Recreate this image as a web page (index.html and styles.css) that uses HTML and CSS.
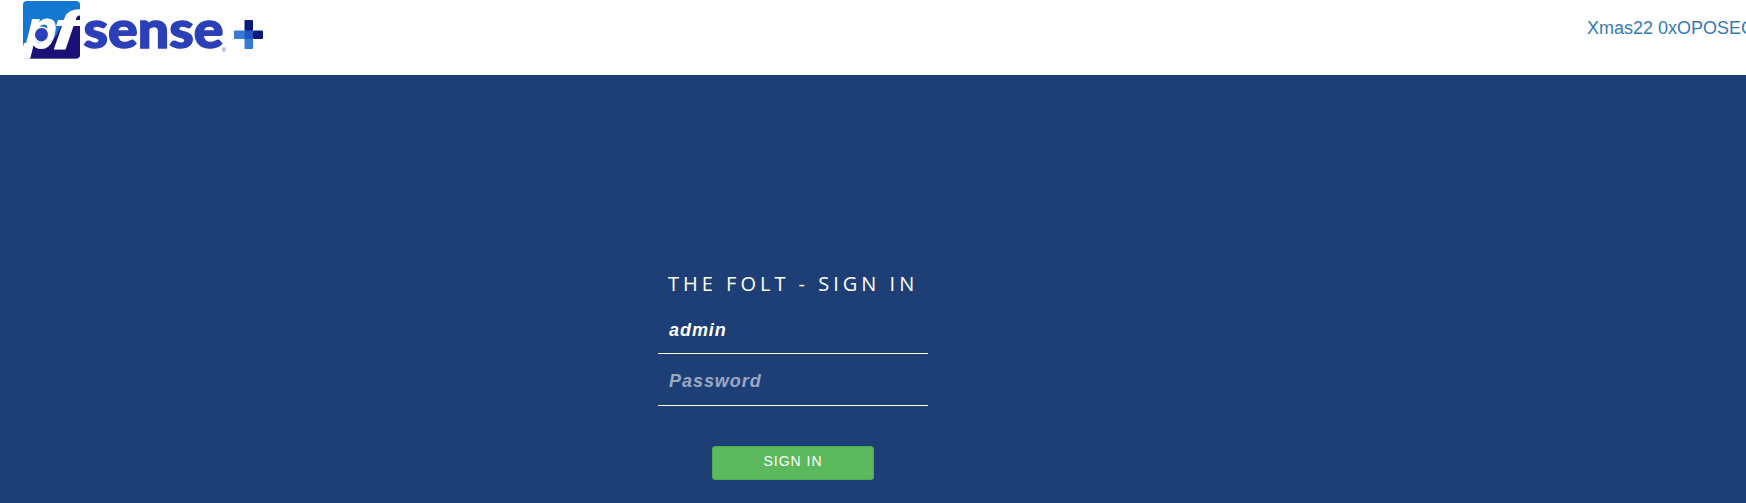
FILE: index.html
```html
<!DOCTYPE html>
<html lang="en">
<head>
<meta charset="utf-8">
<title>Sign In</title>
<link rel="stylesheet" href="styles.css">
</head>
<body>
<header class="topbar">
  <svg class="logo" width="270" height="62" viewBox="0 0 270 62" role="img" aria-label="pfSense plus">
    <defs><clipPath id="badge"><rect x="23" y="1" width="57" height="57.500" rx="4"/></clipPath></defs>
    <g clip-path="url(#badge)">
      <rect x="23" y="1" width="57" height="58" fill="#1477d1"/>
      <path d="M68 12H80V59H28L32 46L50 44L56 36Z" fill="#1b1075"/>
      <path d="M23 47L24 43L33 43L28.500 59H23Z" fill="#fff"/>
      <text class="mark" x="0" y="0" transform="translate(24.500 48) skewX(-4)" textLength="31" lengthAdjust="spacingAndGlyphs">p</text>
      <ellipse cx="41.500" cy="34.500" rx="7.200" ry="7.500" fill="#2b40b8" stroke="#fff" stroke-width="1.500" transform="rotate(20 41 34.500)"/>
      <text class="mark" x="0" y="0" transform="translate(52 48.500) skewX(-4)" textLength="25" lengthAdjust="spacingAndGlyphs">f</text>
    </g>
    <text class="word" x="83.500" y="48" textLength="140" lengthAdjust="spacingAndGlyphs">sense</text>
    <text class="reg" x="222" y="52">®</text>
    <rect x="244.500" y="20" width="8.500" height="11" rx="1" fill="#071b7c"/>
    <rect x="253" y="30.500" width="10" height="8.500" rx="1" fill="#071b7c"/>
    <rect x="234" y="30.500" width="11" height="8.500" rx="1" fill="#367bd4"/>
    <rect x="244.500" y="38" width="8.500" height="11" rx="1" fill="#367bd4"/>
    <rect x="244.500" y="30.500" width="8.500" height="8.500" fill="#2752c5"/>
  </svg>
  <a class="host">Xmas22 0xOPOSEC</a>
</header>
<main class="page">
  <form class="login">
    <h1 class="title">THE FOLT - SIGN IN</h1>
    <input class="field" type="text" value="admin" aria-label="Username">
    <input class="field" type="password" placeholder="Password" aria-label="Password">
    <button class="submit" type="button">SIGN IN</button>
  </form>
</main>
</body>
</html>
```
FILE: styles.css
```css
* { box-sizing: border-box; }
body {
  margin: 0;
  height: 503px;
  overflow: hidden;
  background: #1e3f75;
  font-family: "Liberation Sans", Arial, sans-serif;
}
.topbar {
  display: flex;
  height: 75px;
  background: #fff;
}
.logo { flex: none; }
.mark {
  font: italic bold 54px "Liberation Sans", Arial, sans-serif;
  fill: #fff;
  stroke: #fff;
  stroke-width: 1px;
}
.word {
  font: 900 52px Lato, sans-serif;
  fill: #2b40b8;
  stroke: #2b40b8;
  stroke-width: 1.5px;
}
.reg { font: 5px "Liberation Sans", sans-serif; fill: #2b40b8; }
.host {
  flex: none;
  margin-left: 1317px;
  padding-top: 18px;
  font-size: 18px;
  line-height: 20px;
  white-space: nowrap;
  color: #337ab7;
}
.page { padding: 195px 0 0 658px; }
.login {
  display: flex;
  flex-direction: column;
  width: 270px;
}
.title {
  margin: 0;
  padding-left: 10px;
  font: 400 20px/28px "Open Sans", sans-serif;
  letter-spacing: 4px;
  white-space: nowrap;
  color: #fff;
}
.field {
  width: 270px;
  height: 42px;
  margin: 14px 0 0;
  padding: 0 10px 5px 11px;
  border: 0;
  border-bottom: 1px solid #fff;
  border-radius: 0;
  outline: 0;
  background: transparent;
  color: #fff;
  font: italic bold 18px "Liberation Sans", Arial, sans-serif;
  letter-spacing: 0.95px;
}
.field + .field {
  margin-top: 10px;
  padding-bottom: 7px;
}
.field::placeholder { color: #9aa8c4; opacity: 1; }
.submit {
  width: 162px;
  height: 34px;
  margin: 40px 0 0 54px;
  padding: 0 0 4px;
  border: 1px solid #4cae4c;
  border-radius: 3px;
  background: #5cb85c;
  color: #fff;
  font: 14px "Liberation Sans", Arial, sans-serif;
  letter-spacing: 1px;
}
```
